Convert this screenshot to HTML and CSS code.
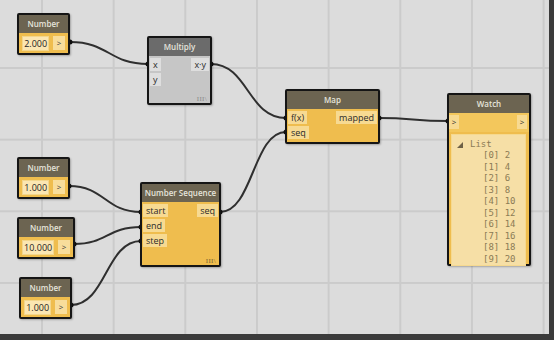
FILE: index.html
```html
<!DOCTYPE html>
<html lang="en">
<head>
    <meta charset="UTF-8">
    <title>Map over Number Sequence</title>
    <link rel="stylesheet" href="styles.css">
</head>
<body>
    <div class="canvas">
        <!-- wires -->
        <svg class="wires" width="549" height="334">
            <path d="M70 42 C109 42, 109 64, 148 64"/>
            <path d="M211 64 C248 64, 248 118, 286 118"/>
            <path d="M220 212 C253 212, 253 132, 286 132"/>
            <path d="M379 118 C413 118, 413 121, 448 121"/>
            <path d="M69 186 C105 186, 105 212, 141 212"/>
            <path d="M74 244 C107 244, 107 227, 141 227"/>
            <path d="M71 305 C106 305, 106 241, 141 241"/>
            <circle cx="70" cy="42" r="2.5"/>
            <circle cx="148" cy="64" r="2.5"/>
            <circle cx="211" cy="64" r="2.5"/>
            <circle cx="286" cy="118" r="2.5"/>
            <circle cx="286" cy="132" r="2.5"/>
            <circle cx="220" cy="212" r="2.5"/>
            <circle cx="379" cy="118" r="2.5"/>
            <circle cx="448" cy="121" r="2.5"/>
            <circle cx="69" cy="186" r="2.5"/>
            <circle cx="74" cy="244" r="2.5"/>
            <circle cx="71" cy="305" r="2.5"/>
            <circle cx="141" cy="212" r="2.5"/>
            <circle cx="141" cy="227" r="2.5"/>
            <circle cx="141" cy="241" r="2.5"/>
        </svg>

        <div class="node number pos-num-a">
            <div class="node-head">Number</div>
            <div class="num-body">
                <span class="num-value">2.000</span>
                <span class="num-out">&gt;</span>
            </div>
        </div>

        <div class="node number pos-num-b">
            <div class="node-head">Number</div>
            <div class="num-body">
                <span class="num-value">1.000</span>
                <span class="num-out">&gt;</span>
            </div>
        </div>

        <div class="node number pos-num-c">
            <div class="node-head">Number</div>
            <div class="num-body">
                <span class="num-value wide">10.000</span>
                <span class="num-out">&gt;</span>
            </div>
        </div>

        <div class="node number pos-num-d">
            <div class="node-head">Number</div>
            <div class="num-body">
                <span class="num-value">1.000</span>
                <span class="num-out">&gt;</span>
            </div>
        </div>

        <div class="node frozen pos-multiply">
            <div class="node-head">Multiply</div>
            <div class="node-body">
                <div class="ports">
                    <span class="port">x</span>
                    <span class="port">y</span>
                </div>
                <div class="ports">
                    <span class="port">x·y</span>
                </div>
                <span class="lacing">III\</span>
            </div>
        </div>

        <div class="node pos-map">
            <div class="node-head">Map</div>
            <div class="node-body">
                <div class="ports">
                    <span class="port">f(x)</span>
                    <span class="port">seq</span>
                </div>
                <div class="ports">
                    <span class="port">mapped</span>
                </div>
            </div>
        </div>

        <div class="node pos-seq">
            <div class="node-head">Number Sequence</div>
            <div class="node-body">
                <div class="ports">
                    <span class="port">start</span>
                    <span class="port">end</span>
                    <span class="port">step</span>
                </div>
                <div class="ports">
                    <span class="port">seq</span>
                </div>
                <span class="lacing">III\</span>
            </div>
        </div>

        <div class="node pos-watch">
            <div class="node-head">Watch</div>
            <div class="watch-ports">
                <span class="port arrow">&gt;</span>
                <span class="port arrow">&gt;</span>
            </div>
            <div class="watch-list">
                <div class="list-root">
                    <svg class="tree-arrow" width="6" height="6"><polygon points="6,0 6,6 0,6"/></svg>
                    List
                </div>
                <div class="item">[0] 2</div>
                <div class="item">[1] 4</div>
                <div class="item">[2] 6</div>
                <div class="item">[3] 8</div>
                <div class="item">[4] 10</div>
                <div class="item">[5] 12</div>
                <div class="item">[6] 14</div>
                <div class="item">[7] 16</div>
                <div class="item">[8] 18</div>
                <div class="item">[9] 20</div>
            </div>
        </div>
    </div>
</body>
</html>
```

FILE: styles.css
```css
body {
    margin: 0;
    width: 554px;
    height: 340px;
    background-color: #3b3b3b;
    font-family: "Open Sans", Arial, sans-serif;
}

.canvas {
    position: relative;
    width: 549px;
    height: 334px;
    overflow: hidden;
    background-color: #dcdcdc;
    background-image:
        linear-gradient(to right, #cbcbcb 2px, transparent 2px),
        linear-gradient(to bottom, #cbcbcb 2px, transparent 2px);
    background-size: 71.67px 71.67px;
    background-position: 41px -4.67px;
}

.wires {
    position: absolute;
    left: 0;
    top: 0;
}

.wires path {
    fill: none;
    stroke: #2f2f2f;
    stroke-width: 2;
}

.wires circle {
    fill: #111;
}

/* nodes */
.node {
    position: absolute;
    display: flex;
    flex-direction: column;
    box-sizing: border-box;
    border: 2px solid #151515;
    border-radius: 2px;
    background-color: #efbd4e;
    box-shadow: 1px 1px 2px rgba(0, 0, 0, 0.25);
}

.node-head {
    height: 18px;
    line-height: 18px;
    flex-shrink: 0;
    background-color: #6c6451;
    color: #e6e4dc;
    font-size: 8px;
    font-weight: 600;
    text-align: center;
    white-space: nowrap;
}

.node-body {
    position: relative;
    flex: 1;
    display: flex;
    justify-content: space-between;
    padding: 2px 1px;
}

.ports {
    display: flex;
    flex-direction: column;
    align-items: flex-start;
    gap: 2px;
}

.port {
    height: 13px;
    line-height: 13px;
    padding: 0 3px;
    background-color: #f7da92;
    color: #2a2a2a;
    font-size: 9px;
}

.lacing {
    position: absolute;
    right: 3px;
    bottom: 0;
    font-family: "Liberation Serif", serif;
    font-size: 7px;
    letter-spacing: 0.3px;
    color: #7a6230;
}

/* number inputs */
.num-body {
    flex: 1;
    display: flex;
    align-items: center;
    gap: 4px;
    padding: 0 3px;
}

.num-value {
    box-sizing: border-box;
    width: 28px;
    height: 15px;
    line-height: 13px;
    border: 1px solid #f3d68c;
    background-color: #fbe6b2;
    color: #222;
    font-size: 9px;
    text-align: center;
}

.num-value.wide {
    width: 33px;
}

.num-out {
    width: 12px;
    height: 14px;
    line-height: 13px;
    background-color: #f8dd9b;
    color: #333;
    font-size: 8px;
    text-align: center;
}

/* frozen (grey) node */
.frozen {
    background-color: #c6c6c6;
}

.frozen .node-head {
    background-color: #6b6b6b;
}

.frozen .port {
    background-color: #dedede;
}

.frozen .lacing {
    color: #8a8a8a;
}

/* watch */
.watch-ports {
    display: flex;
    justify-content: space-between;
    padding: 2px 2px 3px 0;
    background-color: #f3c75c;
}

.port.arrow {
    width: 10px;
    height: 14px;
    line-height: 14px;
    padding: 0;
    text-align: center;
    font-size: 8px;
}

.watch-list {
    flex: 1;
    margin: 2px 3px 3px 2px;
    padding-top: 4px;
    border: 1px solid #f6d98f;
    background-color: #f6dfa6;
    font-family: "DejaVu Sans Mono", "Liberation Mono", monospace;
    font-size: 9px;
    line-height: 11.45px;
    color: #8b7b55;
}

.list-root {
    padding-left: 5px;
    display: flex;
    align-items: center;
    gap: 7px;
}

.tree-arrow polygon {
    fill: #6e6146;
}

.item {
    padding-left: 31px;
}

/* placement on the canvas */
.pos-num-a { left: 17px; top: 13px; width: 53px; height: 42px; }
.pos-num-b { left: 17px; top: 157px; width: 53px; height: 42px; }
.pos-num-c { left: 17px; top: 217px; width: 58px; height: 42px; }
.pos-num-d { left: 19px; top: 277px; width: 53px; height: 42px; }
.pos-multiply { left: 147px; top: 36px; width: 65px; height: 69px; }
.pos-map { left: 285px; top: 89px; width: 95px; height: 55px; }
.pos-seq { left: 140px; top: 182px; width: 81px; height: 85px; }
.pos-watch { left: 447px; top: 93px; width: 84px; height: 173px; }
```
